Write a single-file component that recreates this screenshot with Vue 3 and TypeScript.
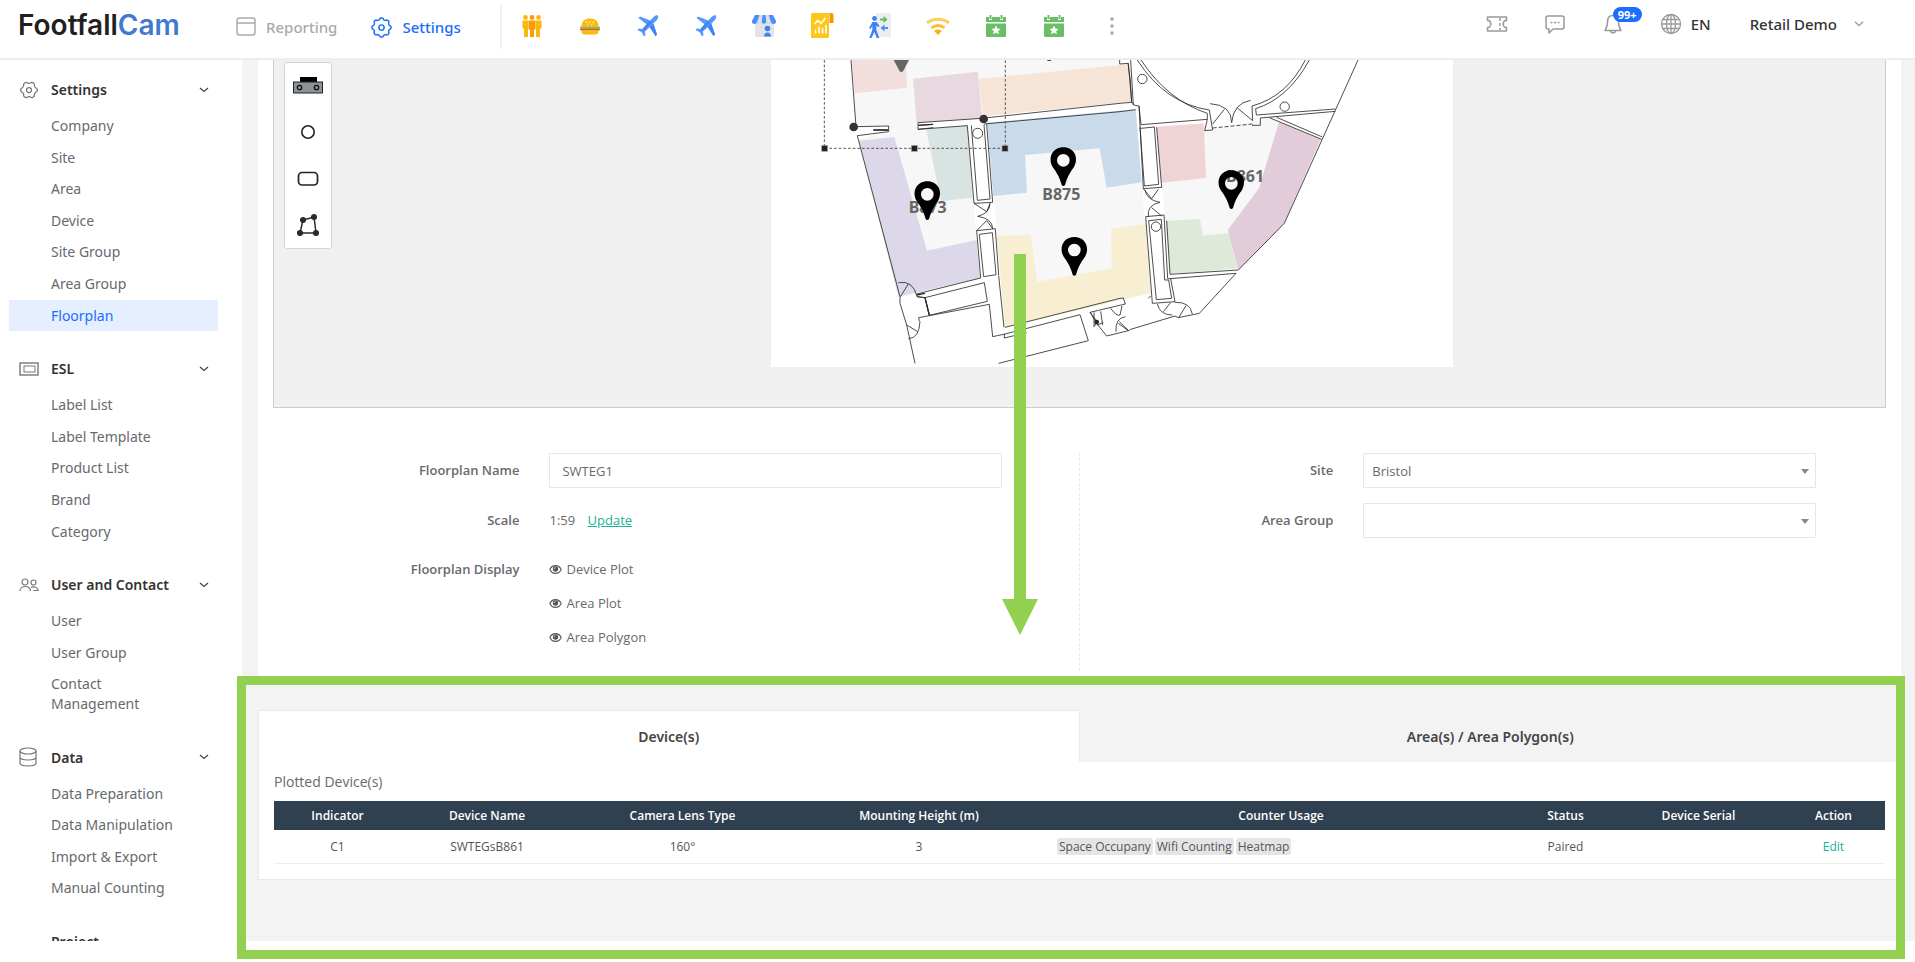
<script setup lang="ts">
import { ref } from 'vue'

interface MenuGroup {
  title: string
  icon: string
  items: string[]
}

const groups: MenuGroup[] = [
  { title: 'Settings', icon: 'gear', items: ['Company', 'Site', 'Area', 'Device', 'Site Group', 'Area Group', 'Floorplan'] },
  { title: 'ESL', icon: 'label', items: ['Label List', 'Label Template', 'Product List', 'Brand', 'Category'] },
  { title: 'User and Contact', icon: 'users', items: ['User', 'User Group', 'Contact Management'] },
  { title: 'Data', icon: 'data', items: ['Data Preparation', 'Data Manipulation', 'Import & Export', 'Manual Counting'] },
  { title: 'Project', icon: '', items: [] },
]

const activeItem = ref('Floorplan')

const apps: { kind: string; name: string }[] = [
  { kind: 'people', name: 'People counting' },
  { kind: 'burger', name: 'Food court' },
  { kind: 'plane', name: 'Airport' },
  { kind: 'plane', name: 'Airport terminal' },
  { kind: 'store', name: 'Store' },
  { kind: 'report', name: 'Report' },
  { kind: 'exit', name: 'Entry and exit' },
  { kind: 'wifi', name: 'Wifi' },
  { kind: 'event', name: 'Event' },
  { kind: 'event', name: 'Event schedule' },
  { kind: 'more', name: 'More' },
]

const floorplanName = ref('SWTEG1')
const site = ref('Bristol')
const areaGroup = ref('')
const tab = ref<'devices' | 'areas'>('devices')

const plots = ['Device Plot', 'Area Plot', 'Area Polygon']

const columns = [
  { title: 'Indicator', width: 127 },
  { title: 'Device Name', width: 172 },
  { title: 'Camera Lens Type', width: 219 },
  { title: 'Mounting Height (m)', width: 254 },
  { title: 'Counter Usage', width: 470 },
  { title: 'Status', width: 99 },
  { title: 'Device Serial', width: 167 },
  { title: 'Action', width: 103 },
]
const totalWidth = columns.reduce((sum, c) => sum + c.width, 0)

const devices = [
  { indicator: 'C1', name: 'SWTEGsB861', lens: '160°', height: 3, usage: ['Space Occupany', 'Wifi Counting', 'Heatmap'], status: 'Paired', serial: '' },
]

const pins = [
  { x: 910, y: 331 },
  { x: 502, y: 433 },
  { x: 943, y: 600 },
  { x: 1414, y: 400 },
]

/* Outline of a rounded cog, centred on 12,12 */
function cog(teeth: number, radius: number, depth: number): string {
  const points: string[] = []
  for (let i = 0; i < 96; i++) {
    const a = (i / 96) * Math.PI * 2
    const wave = Math.tanh(1.6 * Math.cos(teeth * a))
    const r = radius + depth * wave
    points.push(`${(12 + r * Math.cos(a)).toFixed(2)},${(12 + r * Math.sin(a)).toFixed(2)}`)
  }
  return `M${points.join('L')}Z`
}
const cogEight = cog(8, 10, 1)
const cogSix = cog(6, 9, 1)
</script>

<template>
  <div class="shell">
    <header class="topbar">
      <a class="logo" href="#">Footfall<span>Cam</span></a>
      <nav class="modes" aria-label="Main">
        <a class="mode reporting" href="#">
          <svg width="20" height="20" viewBox="0 0 20 20" fill="none" stroke="currentColor" stroke-width="1.5">
            <rect x="1" y="1" width="18" height="17" rx="2.5" /><path d="M1 6h18" />
          </svg>
          Reporting
        </a>
        <a class="mode current" href="#">
          <svg width="21" height="21" viewBox="0 0 24 24" fill="none" stroke="currentColor" stroke-width="1.7" stroke-linejoin="round">
            <path :d="cogEight" /><circle cx="12" cy="12" r="3" />
          </svg>
          Settings
        </a>
      </nav>
      <div class="apps">
        <button v-for="(app, i) in apps" :key="i" class="app" type="button" :aria-label="app.name">
          <svg v-if="app.kind === 'people'" width="24" height="24" viewBox="0 0 24 24">
            <g fill="#fbb80e"><circle cx="5.500" cy="3.500" r="2.400" /><path d="M2.500 6.500h6.200v9H8V23H4v-8.500H2.500z" /><path d="M15.300 6.500h6.200v8H20V23h-4v-7.500h-.7z" /><circle cx="18.500" cy="3.500" r="2.400" /></g>
            <g fill="#fb9a06"><circle cx="12" cy="3.500" r="2.400" /><path d="M9 6.500h6v9h-1V23h-4v-7.500H9z" /></g>
          </svg>
          <svg v-else-if="app.kind === 'burger'" width="24" height="24" viewBox="0 0 24 24">
            <path d="M3.500 12.500C3.500 7 7 4.500 12 4.500s8.500 2.500 8.500 8z" fill="#ffb90a" />
            <path d="M8 9l1-2M11.500 9l1-2M15 9l1-2M9.500 11l1-1.500M13.500 11l1-1.500" stroke="#fff2bd" stroke-width="1" />
            <rect x="2" y="12.500" width="20" height="2" rx="1" fill="#9fae4b" />
            <rect x="2" y="14.500" width="20" height="2" rx="1" fill="#c0680f" />
            <path d="M3.500 16.500h17c0 2.500-1 4-3 4h-11c-2 0-3-1.500-3-4z" fill="#ffb90a" />
          </svg>
          <svg v-else-if="app.kind === 'plane'" width="24" height="24" viewBox="0 0 24 24">
            <path d="M21.800 1.500c-1-.7-2.800 0-4 1.200l-3.600 3.700L4 2.500 2.500 4l8 6.200L6.500 15l-3.700-.6L1.500 16l4.300 2.200L8 22.600 9.500 21l-.6-3.500 4.700-4.300L19.500 22 21 20.500 17.300 9.800l3.500-3.700c1.200-1.300 1.900-3.600 1-4.600z" fill="#5797fb" />
            <path d="M14 13l3.300-3.200L21 20.500 19.500 22zM6.500 15l7.500-8 2 1-8 9z" fill="#3c82f6" />
          </svg>
          <svg v-else-if="app.kind === 'store'" width="26" height="24" viewBox="0 0 26 24">
            <rect x="4" y="8" width="19" height="15" rx="1" fill="#e2e3e6" />
            <path d="M4 1h18l3 6a2.500 2.500 0 0 1-5 1 2.500 2.500 0 0 1-4.700 0 2.500 2.500 0 0 1-4.700 0A2.500 2.500 0 0 1 6 8a2.500 2.500 0 0 1-5-1z" fill="#4c8df7" />
            <path d="M8.500 1h3.200l-1 7.500a2.500 2.500 0 0 1-4.700-.5zM14.500 1h3.200L20 8a2.500 2.500 0 0 1-4.700.5z" fill="#dbe0e8" />
            <circle cx="16.500" cy="14.500" r="2.800" fill="#3c82f6" /><path d="M13 22.500c0-5.500 7-5.500 7 0z" fill="#3c82f6" />
          </svg>
          <svg v-else-if="app.kind === 'report'" width="24" height="25" viewBox="0 0 24 25">
            <path d="M3 0h16v23c0 1-.5 2-1.500 2H2.500C1 25 1 24 1 23V2C1 1 2 0 3 0z" fill="#ffc61a" />
            <path d="M19.500 0h2C23 0 23.500 1 23.500 2v8h-4z" fill="#fb9406" />
            <path d="M4.500 11l3.500-3.500 3 3L15.500 5M5.500 20.500v-4M9 20.500v-7M12.500 20.500V15M16 20.500V12" stroke="#fff" stroke-width="1.600" fill="none" />
          </svg>
          <svg v-else-if="app.kind === 'exit'" width="24" height="26" viewBox="0 0 24 26">
            <rect x="8" y="0" width="15" height="24" rx="1" fill="#ededef" />
            <path d="M12 5.500h3.500V3l4 3.500-4 3.500V7.500H12z" fill="#5fbd62" />
            <path d="M20 14h-3.500v-2.500l-4 3.500 4 3.500V16H20z" fill="#4c8df7" />
            <circle cx="6.500" cy="5.500" r="2.400" fill="#3c82f6" />
            <path d="M4.500 9h4l3 4-1.500 1-1.700-1.500v4.500l3 8h-2.700L6.500 19 3.500 25H1.300l3-8v-4L2.500 16 1 15z" fill="#3c82f6" />
          </svg>
          <svg v-else-if="app.kind === 'wifi'" width="26" height="24" viewBox="0 0 26 24" fill="none" stroke-width="3">
            <path d="M2 9c6.300-5 15.700-5 22 0" stroke="#fdd05e" />
            <path d="M6.500 14c3.800-3.500 9.200-3.500 13 0" stroke="#fcc02f" />
            <path d="M13 21l-3.800-4c2-2 5.600-2 7.600 0z" fill="#fdb10e" />
          </svg>
          <svg v-else-if="app.kind === 'event'" width="22" height="24" viewBox="0 0 22 24">
            <path d="M1 3h3v3h3V3h8v3h3V3h3v5H1z" fill="#68bf66" /><path d="M5.500 1v4M16.500 1v4" stroke="#68bf66" stroke-width="2" />
            <path d="M1 9.500h20v12a1.500 1.500 0 0 1-1.500 1.500h-17A1.500 1.500 0 0 1 1 21.500z" fill="#68bf66" />
            <path d="M11 11.500l1.400 3 3.200.4-2.400 2.200.7 3.200-2.900-1.600-2.900 1.600.7-3.200-2.400-2.200 3.200-.4z" fill="#fff" />
          </svg>
          <svg v-else width="6" height="20" viewBox="0 0 6 20" fill="#a5a5a5">
            <circle cx="3" cy="3" r="1.700" /><circle cx="3" cy="10" r="1.700" /><circle cx="3" cy="17" r="1.700" />
          </svg>
        </button>
      </div>
      <div class="tools">
        <button type="button" class="tool" aria-label="Tickets">
          <svg width="22" height="18" viewBox="0 0 22 18" fill="none" stroke="currentColor" stroke-width="1.500" stroke-linejoin="round">
            <path d="M1.500 2h19v3.500h-1.500c-2.500 1.500-2.500 5.500 0 7h1.500V16h-19v-3.500H3c2.500-1.500 2.500-5.500 0-7H1.500z" /><path d="M14 3v12" stroke-dasharray="3 2" />
          </svg>
        </button>
        <button type="button" class="tool" aria-label="Messages">
          <svg width="20" height="20" viewBox="0 0 20 20" fill="none" stroke="currentColor" stroke-width="1.500" stroke-linejoin="round">
            <path d="M3 2h14a2 2 0 0 1 2 2v9a2 2 0 0 1-2 2H8l-4 4v-4H3a2 2 0 0 1-2-2V4a2 2 0 0 1 2-2z" />
            <path d="M5.500 8.500h2M9 8.500h2M12.500 8.500h2" />
          </svg>
        </button>
        <button type="button" class="tool" aria-label="Notifications">
          <svg width="18" height="20" viewBox="0 0 18 20" fill="none" stroke="currentColor" stroke-width="1.500" stroke-linejoin="round">
            <path d="M9 1.500C5 1.500 3.500 4.500 3.500 8c0 5-1 6.500-2.500 8.500h16C15.500 14.500 14.500 13 14.500 8c0-3.500-1.500-6.500-5.500-6.500z" /><path d="M6.500 17c.5 2.500 4.500 2.500 5 0" />
          </svg>
          <span class="badge">99+</span>
        </button>
        <button type="button" class="language">
          <svg width="22" height="22" viewBox="0 0 22 22" fill="none" stroke="#999" stroke-width="1.300">
            <circle cx="11" cy="11" r="9.500" /><ellipse cx="11" cy="11" rx="4.500" ry="9.500" /><path d="M11 1.500v19M1.500 11h19M3 6.500h16M3 15.500h16" />
          </svg>
          EN
        </button>
        <button type="button" class="account">
          Retail Demo
          <svg width="10" height="6" viewBox="0 0 10 6" fill="none" stroke="#999" stroke-width="1.300"><path d="M1 .7l4 4 4-4" /></svg>
        </button>
      </div>
    </header>

    <div class="body">
      <nav class="sidebar" aria-label="Settings menu">
        <section v-for="group in groups" :key="group.title" class="group">
          <button type="button" class="group-title">
            <span class="group-icon">
              <svg v-if="group.icon === 'gear'" width="20" height="20" viewBox="0 0 24 24" fill="none" stroke="currentColor" stroke-width="1.500">
                <path :d="cogSix" /><circle cx="12" cy="12" r="3" />
              </svg>
              <svg v-else-if="group.icon === 'label'" width="20" height="14" viewBox="0 0 20 14" fill="none" stroke="currentColor">
                <rect x="1" y="1" width="18" height="12" stroke-width="1.400" /><rect x="5" y="4" width="11" height="6" />
              </svg>
              <svg v-else-if="group.icon === 'users'" width="20" height="14" viewBox="0 0 20 14" fill="none" stroke="currentColor" stroke-width="1.200">
                <circle cx="6" cy="4" r="3" /><circle cx="14.500" cy="4.500" r="2.500" /><path d="M1 13c0-6 10-6 10.500 0M12 9.500c3-1.500 7 0 7.200 3h-5" />
              </svg>
              <svg v-else-if="group.icon === 'data'" width="18" height="20" viewBox="0 0 18 20" fill="none" stroke="currentColor" stroke-width="1.200">
                <ellipse cx="9" cy="4" rx="8" ry="3" /><path d="M1 4v12c0 4 16 4 16 0V4M1 10c0 4 16 4 16 0" />
              </svg>
            </span>
            <span class="group-name">{{ group.title }}</span>
            <svg v-if="group.items.length" width="10" height="6" viewBox="0 0 10 6" fill="none" stroke="#444" stroke-width="1.300"><path d="M1 1l4 3.500L9 1" /></svg>
          </button>
          <ul v-if="group.items.length">
            <li v-for="item in group.items" :key="item">
              <a href="#" :class="{ active: item === activeItem }" @click.prevent="activeItem = item">{{ item }}</a>
            </li>
          </ul>
        </section>
      </nav>

      <main class="main">
        <section class="panel">
          <div class="canvas">
            <div class="palette">
              <button type="button" aria-label="Device">
                <svg width="30" height="18" viewBox="0 0 30 18">
                  <rect x="7" y="0" width="17" height="6" fill="#000" /><rect x="0.500" y="5" width="29" height="11" fill="#8d9297" stroke="#222" />
                  <g fill="#8d9297" stroke="#111" stroke-width="1.300"><circle cx="6.500" cy="10.500" r="2.200" /><circle cx="23.500" cy="10.500" r="2.200" /></g>
                </svg>
              </button>
              <button type="button" aria-label="Circle">
                <svg width="16" height="16" viewBox="0 0 16 16"><circle cx="8" cy="8" r="6.200" fill="none" stroke="#222" stroke-width="1.600" /></svg>
              </button>
              <button type="button" aria-label="Rectangle">
                <svg width="22" height="16" viewBox="0 0 22 16"><rect x="1.500" y="1.500" width="19" height="12.500" rx="3.500" fill="none" stroke="#222" stroke-width="1.700" /></svg>
              </button>
              <button type="button" aria-label="Polygon">
                <svg width="24" height="24" viewBox="0 0 24 24" fill="#2b2b2b" stroke="#2b2b2b" stroke-width="1.500">
                  <path d="M4 20L7 7l11-3 2 16z" fill="none" /><circle cx="4" cy="20" r="2.300" /><circle cx="7" cy="7" r="2.300" /><circle cx="18" cy="4" r="2.300" /><circle cx="20" cy="20" r="2.300" />
                </svg>
              </button>
            </div>
            <div class="stage">
              <svg class="plan" width="682" height="307" viewBox="33 30 2046 921" role="img" aria-label="Floorplan SWTEG1">
                <rect x="33" y="30" width="2046" height="921" fill="#fff" />
                <g fill="#f7f7f7">
                  <polygon points="275,30 1080,30 1112,60 1115,156 665,200 470,218 474,238 385,245 385,228 288,232" />
                  <polygon points="292,268 390,245 622,228 660,685 415,740" />
                  <polygon points="682,218 1127,178 1172,730 735,830" />
                  <polygon points="1190,230 1333,222 1355,240 1530,205 1685,268 1575,520 1435,660 1230,672" />
                </g>
                <polygon points="275,30 437,30 441,113 284,130" fill="#f3dede" />
                <polygon points="459,86 653,65 667,205 470,218" fill="#e8d8e0" />
                <polygon points="655,87 1103,43 1113,155 671,198" fill="#f6e5d6" />
                <polygon points="498,237 623,226 637,443 543,453" fill="#d8e3e2" />
                <polygon points="298,272 403,261 501,602 650,570 660,685 415,740" fill="#dcd8e9" />
                <polygon points="682,218 1127,178 1145,397 1040,413 1019,295 795,315 801,428 700,438" fill="#c9daea" />
                <polygon points="710,558 812,555 832,695 1055,655 1053,537 1157,522 1172,730 735,830" fill="#f8eed2" />
                <polygon points="1189,230 1331,220 1338,384 1205,398" fill="#f0d3d4" />
                <polygon points="1218,512 1320,507 1329,557 1405,549 1432,655 1230,672" fill="#dee9da" />
                <polygon points="1557,216 1682,268 1572,520 1435,660 1403,540 1497,415" fill="#e3ccd9" />

                <g fill="none" stroke="#2a2a2a" stroke-width="2.500">
                  <path d="M273 30L288 230L386 228V245L292 257L420 740M340 240h45" />
                  <path d="M474 218L665 205L1080 160L1115 157L1111 92L1104 40M474 218V238L520 233M474 226L520 223M474 238L622 227M672 222L1080 185L1127 179" />
                  <path d="M622 227L642 460L698 457L680 222M634 226L652 451L690 447L672 224" />
                  <circle cx="653" cy="250" r="15" />
                  <path d="M642 460L680 485L690 460Q690 490 653 499Q697 505 698 536L680 512L650 542" />
                  <path d="M650 542L706 536L716 675M650 542L662 684L470 732M658 553L697 548L708 674L671 680L658 553" />
                  <path d="M471 740L495 743L673 698L682 754L508 796L495 743L508 796M478 814L476 803L688 763L698 860L735 852L960 794L985 872L716 940M733 852V864L800 848" />
                  <path d="M735 832L1080 745L1090 744L1096 762L990 787L1010 820L1040 858L1105 842M716 677L732 832" />
                  <path d="M415 698Q460 690 471 740L495 743M420 742L445 702M420 742V760L440 825L465 940M480 814Q478 865 445 866M440 825L473 845" />
                  <path d="M1002 787V830M1022 784L1028 825M990 787L1012 815L1002 830M1010 825L1030 818M1052 775Q1070 800 1080 795L1086 768M1096 800Q1065 805 1068 845M1075 820L1105 842" />
                </g>
                <g fill="none" stroke="#2a2a2a" stroke-width="4">
                  <path d="M340 240h45M476 226L518 223M495 743L508 796M470 735L495 730" />
                </g>
                <circle cx="1010" cy="816" r="7" fill="#222" />
                <g transform="translate(960 0)" fill="none" stroke="#2a2a2a" stroke-width="2.500">
                  <path d="M119 30V42L145 40L155 155L161 165L177 168L183 224L382 208L374 242L398 240L388 180Q255 160 172 30M183 30Q262 150 382 190L382 208" />
                  <path d="M152 30L160 165M183 235L223 231L236 403L193 408L180 232M177 168L190 416L245 412L230 232" />
                  <path d="M676 30Q620 140 516 168L518 212M688 30Q625 145 527 176L529 195L766 177M516 226H541V204L766 184M568 203L725 268M590 202L727 261" />
                  <path d="M834 30L613 520L475 660L270 673L260 512" />
                  <path d="M398 234L518 222" stroke-dasharray="12 6" />
                  <path d="M398 222L433 178M390 161Q455 165 455 218Q460 160 512 151M472 174L518 212" />
                  <circle cx="187" cy="87" r="14" /><circle cx="614" cy="170" r="14" /><circle cx="228" cy="530" r="14" />
                  <path d="M190 416L215 446L235 418M195 420Q200 450 240 457Q200 465 205 500M215 473L245 498" />
                  <path d="M197 500L252 495L263 686L272 686L285 755L217 760L197 500M206 512L244 508L254 690L266 690L275 745L229 749L206 512" />
                  <path d="M270 686L468 670L358 790L295 803L285 798L152 838L146 842L118 815M232 762Q240 795 277 795M272 758L250 785M285 757Q330 755 337 792M318 767L296 803M205 745L212 738" />
                </g>
                <g fill="none" stroke="#555" stroke-width="3" stroke-dasharray="8 6">
                  <path d="M193 30V295H736V30" />
                </g>
                <g fill="#222" stroke="#aaa" stroke-width="2">
                  <rect x="185" y="286" width="18" height="18" /><rect x="454" y="286" width="18" height="18" /><rect x="726" y="286" width="18" height="18" />
                </g>
                <circle cx="281" cy="231" r="13" fill="#333" /><circle cx="671" cy="207" r="13" fill="#333" />
                <path d="M401 30H447L430 62Q424 70 418 62Z" fill="#666" />
                <path d="M862 30h11v3h-11z" fill="#444" />
                <g class="room">
                  <text x="446" y="488">B873</text><text x="847" y="449">B875</text><text x="1398" y="395">B861</text>
                </g>
                <path v-for="(pin, i) in pins" :key="i" :transform="`translate(${pin.x} ${pin.y})`" fill-rule="evenodd" d="M-5 74Q-12 46 -32 20C-48 -8 -32 -39 0 -39S48 -8 32 20Q12 46 5 74Q0 80 -5 74ZM0 -19A19 19 0 1 0 0 19A19 19 0 1 0 0 -19Z" />
              </svg>
            </div>
          </div>

          <form class="details" @submit.prevent>
            <div class="half first">
              <label for="fp-name">Floorplan Name</label>
              <input id="fp-name" v-model="floorplanName" type="text" />
              <span class="label">Scale</span>
              <div class="value">1:59 <a href="#">Update</a></div>
              <span class="label">Floorplan Display</span>
              <div class="plots">
                <button v-for="plot in plots" :key="plot" type="button">
                  <svg width="13" height="9" viewBox="0 0 14 10">
                    <path d="M7 .7C4 .7 1.800 2.500.7 5 1.800 7.500 4 9.300 7 9.300S12.200 7.500 13.300 5C12.200 2.500 10 .7 7 .7z" fill="none" stroke="#55585a" stroke-width="1.200" /><circle cx="7" cy="4.500" r="3" fill="#55585a" /><path d="M5.500 4.500Q5.500 3 7 3" stroke="#fff" stroke-width=".7" fill="none" />
                  </svg>
                  {{ plot }}
                </button>
              </div>
            </div>
            <div class="half second">
              <label for="fp-site">Site</label>
              <div class="select">
                <select id="fp-site" v-model="site"><option>Bristol</option></select>
              </div>
              <label for="fp-group">Area Group</label>
              <div class="select">
                <select id="fp-group" v-model="areaGroup"><option value=""></option></select>
              </div>
            </div>
            <svg class="arrow" width="36" height="381" viewBox="0 0 36 381" aria-hidden="true"><path d="M12 0H24V345H36L18 381L0 345H12Z" fill="#92d050" /></svg>
          </form>
        </section>

        <section class="region">
          <div class="tabs" role="tablist">
            <button type="button" role="tab" :aria-selected="tab === 'devices'" @click="tab = 'devices'">Device(s)</button>
            <button type="button" role="tab" :aria-selected="tab === 'areas'" @click="tab = 'areas'">Area(s) / Area Polygon(s)</button>
          </div>
          <div class="card">
            <h2>Plotted Device(s)</h2>
            <table>
              <colgroup>
                <col v-for="c in columns" :key="c.title" :style="{ width: (c.width / totalWidth) * 100 + '%' }" />
              </colgroup>
              <thead>
                <tr><th v-for="c in columns" :key="c.title" scope="col">{{ c.title }}</th></tr>
              </thead>
              <tbody>
                <tr v-for="d in devices" :key="d.indicator">
                  <td>{{ d.indicator }}</td>
                  <td>{{ d.name }}</td>
                  <td>{{ d.lens }}</td>
                  <td>{{ d.height }}</td>
                  <td><div class="tags"><span v-for="u in d.usage" :key="u">{{ u }}</span></div></td>
                  <td>{{ d.status }}</td>
                  <td>{{ d.serial }}</td>
                  <td><a href="#">Edit</a></td>
                </tr>
              </tbody>
            </table>
          </div>
        </section>
      </main>
    </div>
  </div>
</template>

<style>
body {
  margin: 0;
  background: #fff;
}
</style>

<style scoped>
* {
  box-sizing: border-box;
}
.shell {
  display: flex;
  flex-direction: column;
  height: 100vh;
  padding-bottom: 21px;
  font-family: "Noto Sans", "Open Sans", sans-serif;
  font-size: 14px;
  color: #676a6c;
}
button {
  font: inherit;
  color: inherit;
  background: none;
  border: 0;
  padding: 0;
  cursor: pointer;
}
a {
  color: inherit;
  text-decoration: none;
}
svg {
  display: block;
  flex: none;
}

/* Top bar */
.topbar {
  display: flex;
  flex: none;
  height: 60px;
  padding-bottom: 1px;
  border-bottom: 2px solid #eee;
}
.logo {
  width: 236px;
  padding-left: 18px;
  font: 600 28px/50px Inter, sans-serif;
  color: #231f20;
}
.logo span {
  color: #4179d0;
}
.modes {
  display: flex;
  align-items: center;
  gap: 34px;
  width: 266px;
  border-right: 2px solid #f0f0f0;
  margin: 5px 0 8px;
}
.mode {
  display: flex;
  align-items: center;
  gap: 10px;
  font-size: 15px;
  font-weight: 500;
  color: #aaa;
}
.mode.current {
  color: #1a6dff;
}
.apps {
  display: flex;
  height: 51px;
  padding-left: 1px;
}
.app {
  display: flex;
  width: 58px;
  align-items: center;
  justify-content: center;
}
.tools {
  display: flex;
  align-items: center;
  height: 48px;
  margin-left: auto;
  padding-right: 51px;
  color: #999;
}
.tool {
  position: relative;
  display: flex;
  justify-content: center;
  width: 58px;
}
.badge {
  position: absolute;
  left: 29px;
  top: -7px;
  padding: 0 5px;
  border-radius: 8px;
  background: #1a6dff;
  color: #fff;
  font-size: 11px;
  font-weight: 700;
  line-height: 15px;
}
.language {
  display: flex;
  align-items: center;
  gap: 9px;
  margin-left: 18px;
  color: #333;
  font-size: 15px;
  font-weight: 500;
}
.account {
  display: flex;
  align-items: center;
  gap: 17px;
  margin-left: 39px;
  color: #333;
  font-size: 15px;
  font-weight: 500;
}

/* Sidebar */
.body {
  display: flex;
  flex: 1;
  min-height: 0;
}
.sidebar {
  flex: none;
  width: 242px;
  padding: 9px 24px 0 9px;
  overflow: hidden;
}
.group {
  margin-bottom: 17px;
}
.group-title {
  display: flex;
  align-items: center;
  width: 100%;
  height: 41px;
  padding: 0 9px 0 10px;
  color: #333;
  font-weight: 600;
  text-align: left;
}
.group-icon {
  display: flex;
  width: 32px;
  color: #777;
}
.group-name {
  flex: 1;
}
ul {
  margin: 0;
  padding: 0;
  list-style: none;
}
li a {
  display: block;
  padding: 6px 40px 6px 42px;
  line-height: 1.4;
}
li a.active {
  background: #e6efff;
  color: #1a6dff;
}

/* Main area */
.main {
  display: flex;
  flex-direction: column;
  flex: 1;
  min-width: 0;
  padding: 0 14px 0 16px;
  background: #f3f3f3;
  font-family: "Open Sans", "Noto Sans", sans-serif;
  font-size: 13px;
}
.panel {
  background: #fff;
  padding-bottom: 14px;
}
.canvas {
  display: flex;
  align-items: flex-start;
  height: 348px;
  margin: 0 15px;
  padding: 2px 0 0 10px;
  background: #f0f0f0;
  border: 1px solid #ccc;
  border-top: 0;
}
.palette {
  display: flex;
  flex-direction: column;
  width: 48px;
  height: 187px;
  background: #fff;
  border: 1px solid #d5d5d5;
  border-radius: 3px;
}
.palette button {
  display: flex;
  flex: 1;
  align-items: center;
  justify-content: center;
}
.stage {
  display: flex;
  flex: 1;
  justify-content: center;
  margin: -2px 0 0 7px;
}
.room {
  font: 700 48px "Noto Sans", sans-serif;
  fill: #666;
}
.details {
  position: relative;
  display: grid;
  grid-template-columns: 1fr 1fr;
  margin-top: 45px;
}
.half {
  display: grid;
  grid-auto-rows: min-content;
  gap: 15px 30px;
  min-height: 218px;
}
.half > :nth-child(odd) {
  grid-column: 1;
  text-align: right;
  font-weight: 600;
  line-height: 34px;
}
.half > :nth-child(even) {
  grid-column: 2;
}
.first {
  grid-template-columns: 262fr 453fr 47fr;
  border-right: 1px dashed #e7eaec;
}
.second {
  grid-template-columns: 254fr 453fr 55fr;
}
input,
select {
  display: block;
  width: 100%;
  height: 35px;
  border: 1px solid #e5e6e7;
  border-radius: 1px;
  background: #fff;
  color: inherit;
  font: inherit;
  appearance: none;
}
input {
  padding: 0 12px;
}
select {
  padding: 0 8px;
}
.value {
  line-height: 34px;
}
.value a {
  margin-left: 9px;
  color: #1ab394;
  text-decoration: underline;
}
.plots {
  display: flex;
  flex-direction: column;
  align-items: flex-start;
}
.plots button {
  display: flex;
  align-items: center;
  gap: 4px;
  height: 34px;
}
.select {
  position: relative;
}
.select::after {
  content: "";
  position: absolute;
  right: 7px;
  top: 16px;
  border: 4px solid transparent;
  border-top: 5px solid #888;
  border-bottom: 0;
  pointer-events: none;
}
.arrow {
  position: absolute;
  left: 46%;
  margin-left: -12px;
  bottom: 36px;
  pointer-events: none;
}

/* Highlighted region with the device list */
.region {
  position: relative;
  flex: 1;
  padding-top: 25px;
}
.region::after {
  content: "";
  position: absolute;
  inset: -9px -4px -18px -21px;
  border: 9px solid #92d050;
  pointer-events: none;
}
.tabs {
  display: grid;
  grid-template-columns: 1fr 1fr;
  height: 52px;
  font-family: "Noto Sans", sans-serif;
  font-size: 14px;
  font-weight: 600;
  color: #444;
}
.tabs button {
  border: 1px solid transparent;
}
.tabs button[aria-selected="true"] {
  background: #fff;
  border-color: #e7eaec;
  border-bottom-color: #fff;
}
.card {
  padding: 10px 15px 15px;
  background: #fff;
  border: 1px solid #e7eaec;
  border-top: 0;
}
h2 {
  margin: 0 0 9px;
  font-size: 14px;
  font-weight: 500;
  line-height: 20px;
}
table {
  width: 100%;
  table-layout: fixed;
  border-collapse: collapse;
  font-size: 12px;
  text-align: center;
  color: #555;
}
th {
  height: 29px;
  padding: 0;
  background: #2f4050;
  color: #fff;
  font-weight: 600;
}
td {
  height: 33px;
  padding: 0;
  border-bottom: 1px solid #eee;
}
td a {
  color: #1ab394;
}
.tags {
  display: flex;
  gap: 2px;
  padding-left: 11px;
}
.tags span {
  padding: 0 2px;
  border-radius: 3px;
  background: #e4e5e7;
  line-height: 17px;
  white-space: nowrap;
}
</style>
